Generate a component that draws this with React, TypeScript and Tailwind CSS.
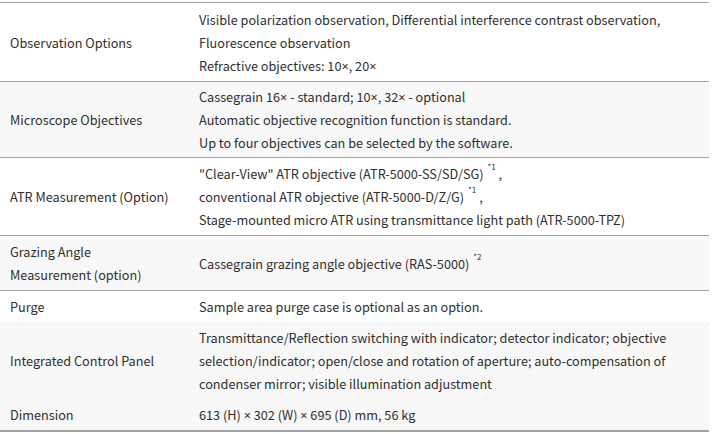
import React from 'react';

type Row = {
  label: React.ReactNode;
  value: React.ReactNode;
  shaded?: boolean;
  border?: boolean;
  pad?: string;
};

const Sup = ({ children }: { children: React.ReactNode }) => (
  <sup className="text-[8px] leading-none align-[5px] ml-[4px]">{children}</sup>
);

// latin multiplication sign (the CJK font draws it full width)
const X = () => (
  <span className="leading-none" style={{ fontFamily: '"Noto Sans", sans-serif' }}>
    ×
  </span>
);

const rows: Row[] = [
  {
    label: 'Observation Options',
    value: (
      <>
        Visible polarization observation, Differential interference contrast observation,
        <br />
        Fluorescence observation
        <br />
        Refractive objectives: 10<X />, 20<X />
      </>
    ),
    pad: 'pt-[5px] pb-[4px]',
  },
  {
    label: 'Microscope Objectives',
    value: (
      <>
        Cassegrain 16<X /> - standard; 10<X />, 32<X /> - optional
        <br />
        Automatic objective recognition function is standard.
        <br />
        Up to four objectives can be selected by the software.
      </>
    ),
    shaded: true,
    border: true,
    pad: 'py-[3px]',
  },
  {
    label: 'ATR Measurement (Option)',
    value: (
      <>
        "Clear-View" ATR objective (ATR-5000-SS/SD/SG)<Sup>*1</Sup> ,
        <br />
        conventional ATR objective (ATR-5000-D/Z/G)<Sup>*1</Sup> ,
        <br />
        Stage-mounted micro ATR using transmittance light path (ATR-5000-TPZ)
      </>
    ),
    border: true,
    pad: 'py-[4px]',
  },
  {
    label: (
      <>
        Grazing Angle
        <br />
        Measurement (option)
      </>
    ),
    value: (
      <>
        Cassegrain grazing angle objective (RAS-5000)<Sup>*2</Sup>
      </>
    ),
    shaded: true,
    border: true,
    pad: 'py-[4px]',
  },
  {
    label: 'Purge',
    value: 'Sample area purge case is optional as an option.',
    border: true,
    pad: 'py-[4px]',
  },
  {
    label: 'Integrated Control Panel',
    value: (
      <>
        Transmittance/Reflection switching with indicator; detector indicator; objective
        <br />
        selection/indicator; open/close and rotation of aperture; auto-compensation of
        <br />
        condenser mirror; visible illumination adjustment
      </>
    ),
    shaded: true,
    pad: 'py-[4px]',
  },
  {
    label: 'Dimension',
    value: (
      <>
        613 (H) <X /> 302 (W) <X /> 695 (D) mm, 56 kg
      </>
    ),
    shaded: true,
    pad: 'py-[4px]',
  },
];

export default function App() {
  return (
    <div className="w-[713px] h-[434px] bg-white pt-[2px] pr-[4px]">
      <table
        className="w-[709px] border-collapse text-[12.7px] leading-[23px] text-[#2f2f2f]"
        style={{ fontFamily: '"Noto Sans CJK KR", "Noto Sans", sans-serif' }}
      >
        <tbody>
          {rows.map((row, i) => (
            <tr
              key={i}
              className={`${row.shaded ? 'bg-[#f8f8f8]' : 'bg-white'} ${
                i === 0 || row.border ? 'border-t border-t-[#a3a3a3]' : ''
              } ${i === rows.length - 1 ? 'border-b-2 border-b-[#a3a3a3]' : ''}`}
            >
              <td className={`w-[187px] pl-[10px] align-middle ${row.pad}`}>{row.label}</td>
              <td className={`pl-[12px] align-middle ${row.pad}`}>{row.value}</td>
            </tr>
          ))}
        </tbody>
      </table>
    </div>
  );
}
